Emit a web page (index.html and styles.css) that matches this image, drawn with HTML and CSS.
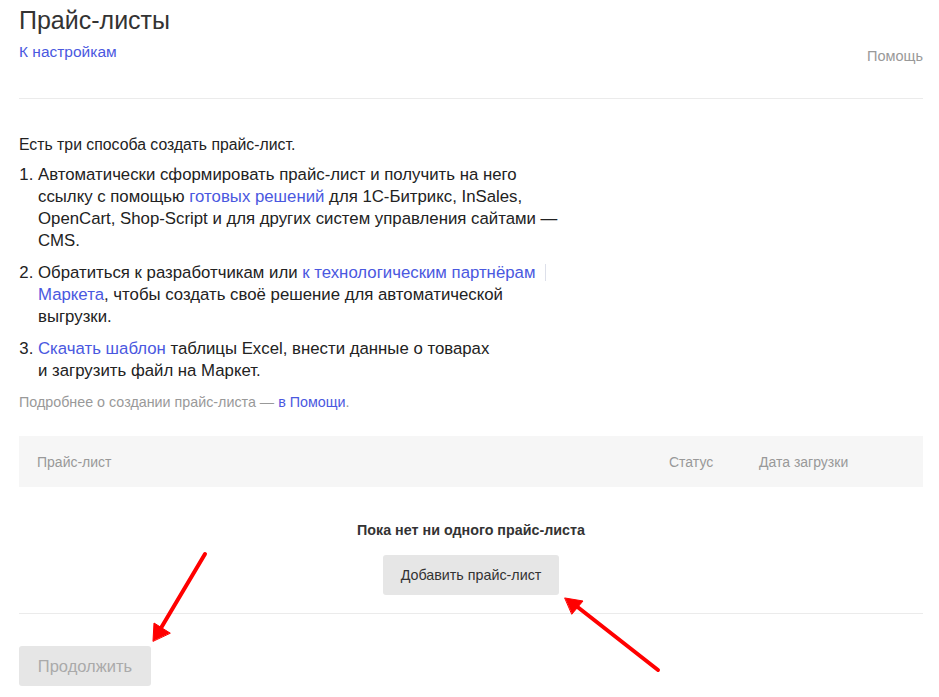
FILE: index.html
```html
<!DOCTYPE html>
<html lang="ru">
<head>
<meta charset="utf-8">
<link rel="stylesheet" href="styles.css">
</head>
<body>
<div class="page">
  <header class="head">
    <div>
      <h1 class="title">Прайс-листы</h1>
      <a class="back" href="#">К настройкам</a>
    </div>
    <a class="help" href="#">Помощь</a>
  </header>

  <section class="intro">
    <p class="lead">Есть три способа создать прайс-лист.</p>
    <ol class="ways">
      <li>Автоматически сформировать прайс-лист и получить на него<br>ссылку с помощью <a href="#">готовых решений</a> для 1С-Битрикс, InSales,<br>OpenCart, Shop-Script и для других систем управления сайтами —<br>CMS.</li>
      <li>Обратиться к разработчикам или <a href="#">к технологическим партнёрам</a><span class="caret"></span><br><a href="#">Маркета</a>, чтобы создать своё решение для автоматической<br>выгрузки.</li>
      <li><a href="#">Скачать шаблон</a> таблицы Excel, внести данные о товарах<br>и загрузить файл на Маркет.</li>
    </ol>
    <p class="more">Подробнее о создании прайс-листа — <a href="#">в Помощи</a>.</p>
  </section>

  <div class="thead">
    <span class="th">Прайс-лист</span>
    <span class="th">Статус</span>
    <span class="th">Дата загрузки</span>
  </div>

  <div class="empty">
    <p class="empty-text">Пока нет ни одного прайс-листа</p>
    <button class="btn">Добавить прайс-лист</button>
  </div>

  <div class="footer">
    <button class="btn btn-disabled">Продолжить</button>
  </div>
</div>

<svg class="arrows" width="939" height="697" viewBox="0 0 939 697">
  <g stroke="#ff0000" stroke-width="4" stroke-linecap="round" fill="#ff0000">
    <line x1="205" y1="554" x2="161" y2="628"/>
    <polygon points="153,641 154,623 170,633" stroke-width="1" stroke-linejoin="round"/>
    <line x1="658" y1="670" x2="575" y2="605"/>
    <polygon points="565,598 583,601 572,614" stroke-width="1" stroke-linejoin="round"/>
  </g>
</svg>
</body>
</html>
```

FILE: styles.css
```css
* { box-sizing: border-box; }
html, body { margin: 0; padding: 0; background: #fff; }
body {
  font-family: "Liberation Sans", Arial, sans-serif;
  color: #222;
  width: 939px;
  height: 697px;
  overflow: hidden;
  position: relative;
}
a { color: #4a58e0; text-decoration: none; }
.page { padding: 0 16px 0 19px; }

.head {
  display: flex;
  justify-content: space-between;
  align-items: flex-end;
  padding-bottom: 36px;
  border-bottom: 1px solid #ebebeb;
}
.title {
  margin: 0;
  font-weight: normal;
  font-size: 25px;
  line-height: 40px;
  color: #333;
}
.back {
  display: block;
  margin-top: 2px;
  font-size: 15.5px;
  line-height: 20px;
}
.help {
  font-size: 14.5px;
  line-height: 20px;
  color: #999;
  margin-bottom: -4px;
}

.intro { padding-top: 35px; }
.lead { margin: 0 0 8px; font-size: 15.8px; line-height: 22px; }
.ways {
  margin: 0;
  padding: 0 0 0 19px;
  font-size: 16.8px;
  line-height: 22px;
  white-space: nowrap;
}
.ways li { margin-bottom: 10px; }
.caret {
  display: inline-block;
  width: 0;
  height: 17px;
  margin-left: 10px;
  border-left: 1px solid #dde0ea;
  vertical-align: -3px;
}
.more { margin: 0; font-size: 14.3px; line-height: 20px; color: #999; }

.thead {
  margin-top: 24px;
  height: 51px;
  background: #f6f6f6;
  display: grid;
  grid-template-columns: 1fr 90px 164px;
  align-items: center;
  padding-left: 18px;
  font-size: 14px;
  color: #999;
}

.empty {
  display: flex;
  flex-direction: column;
  align-items: center;
  padding: 34px 0 18px;
  border-bottom: 1px solid #ebebeb;
}
.empty-text {
  margin: 0 0 16px;
  font-size: 14.3px;
  font-weight: bold;
  line-height: 18px;
  color: #333;
}
.btn {
  font-family: inherit;
  font-size: 14.3px;
  color: #333;
  background: #e6e6e6;
  border: 0;
  border-radius: 3px;
  height: 40px;
  padding: 0 18px;
}
.footer { padding-top: 32px; }
.btn-disabled { color: #aaa; width: 132px; font-size: 16.5px; padding: 0; }

.arrows { position: absolute; left: 0; top: 0; pointer-events: none; }
```
